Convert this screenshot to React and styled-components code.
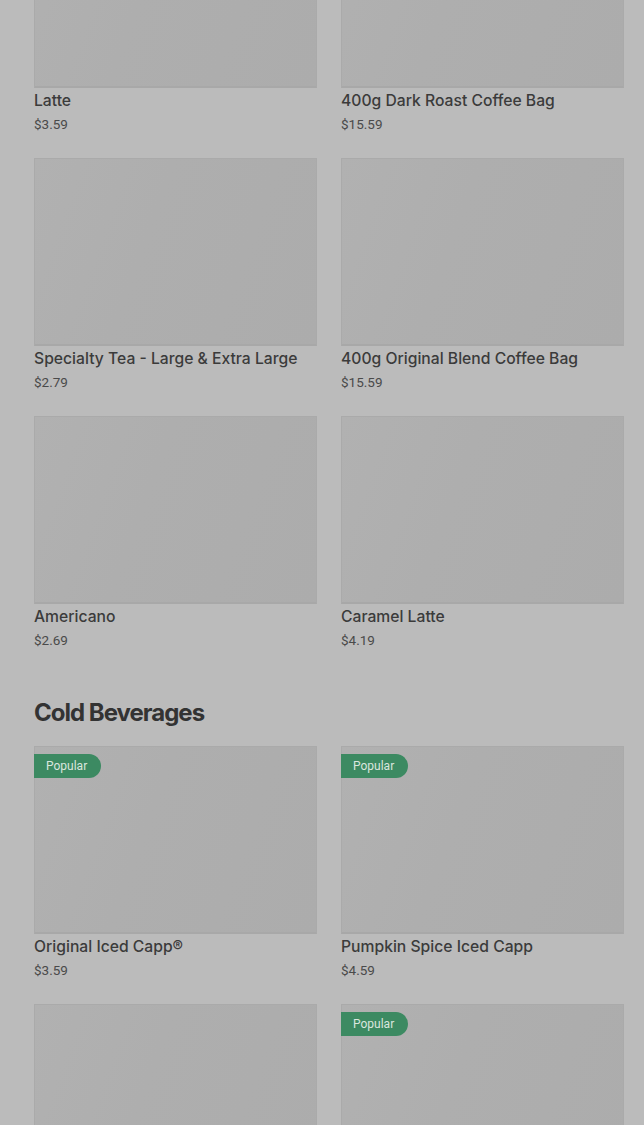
import React from "react";
import styled, { createGlobalStyle } from "styled-components";

const Global = createGlobalStyle`
  html, body { margin: 0; padding: 0; background: #bbbbbb; }
  body { font-family: Roboto, "Liberation Sans", sans-serif; overflow: hidden; }
`;

const Page = styled.main`
  padding: 0 20px 0 34px;
  margin-top: -100px;
`;

const Section = styled.section`
  & + & { margin-top: 46px; }
`;

const SectionTitle = styled.h2`
  margin: 0 0 17px;
  font-family: Inter, "Liberation Sans", sans-serif;
  font-size: 24px;
  line-height: 32px;
  font-weight: 700;
  letter-spacing: -1px;
  color: #333333;
`;

const Grid = styled.div`
  display: grid;
  grid-template-columns: repeat(2, 283px);
  column-gap: 24px;
  row-gap: 23px;
`;

const Card = styled.article`
  display: flex;
  flex-direction: column;
`;

const Thumb = styled.div`
  position: relative;
  height: 188px;
  box-sizing: border-box;
  border: 1px solid #aaaaaa;
  border-bottom: 2px solid #a8a8a8;
  background: linear-gradient(110deg, #b1b1b1 0%, #aeaeae 40%, #acacac 100%);
`;

const Badge = styled.span`
  position: absolute;
  top: 7px;
  left: -1px;
  height: 24px;
  padding: 0 14px 0 12px;
  display: flex;
  align-items: center;
  background: #3c8a62;
  color: #dae6df;
  font-size: 12px;
  border-radius: 0 12px 12px 0;
`;

const Name = styled.h3`
  margin: 1px 0 0;
  font-family: Inter, Roboto, "Liberation Sans", sans-serif;
  font-size: 15.7px;
  line-height: 24px;
  font-weight: 500;
  color: #3b3b3b;
`;

const Price = styled.span`
  font-size: 13.5px;
  line-height: 22px;
  color: #4a4a4a;
`;

const sections = [
  {
    title: null,
    items: [
      { name: "Latte", price: "$3.59" },
      { name: "400g Dark Roast Coffee Bag", price: "$15.59" },
      { name: "Specialty Tea - Large & Extra Large", price: "$2.79" },
      { name: "400g Original Blend Coffee Bag", price: "$15.59" },
      { name: "Americano", price: "$2.69" },
      { name: "Caramel Latte", price: "$4.19" },
    ],
  },
  {
    title: "Cold Beverages",
    items: [
      { name: "Original Iced Capp®", price: "$3.59", popular: true },
      { name: "Pumpkin Spice Iced Capp", price: "$4.59", popular: true },
      { name: "Iced Coffee", price: "$2.49" },
      { name: "Iced Latte", price: "$3.99", popular: true },
    ],
  },
];

export default function App() {
  return (
    <>
      <Global />
      <Page>
        {sections.map((s, i) => (
          <Section key={i}>
            {s.title && <SectionTitle>{s.title}</SectionTitle>}
            <Grid>
              {s.items.map((it) => (
                <Card key={it.name}>
                  <Thumb>{it.popular && <Badge>Popular</Badge>}</Thumb>
                  <Name>{it.name}</Name>
                  <Price>{it.price}</Price>
                </Card>
              ))}
            </Grid>
          </Section>
        ))}
      </Page>
    </>
  );
}
